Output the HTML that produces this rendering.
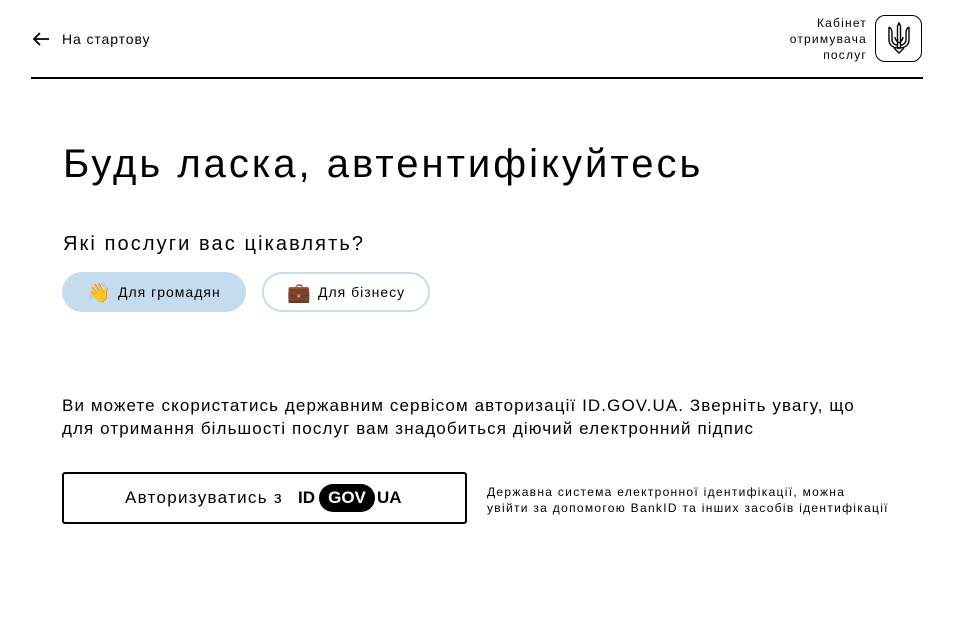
<!DOCTYPE html>
<html><head><meta charset="utf-8"><style>
body{margin:0;width:955px;height:638px;background:#fff;font-family:"Liberation Sans","DejaVu Sans",sans-serif;color:#000;position:relative;overflow:hidden}
.a{position:absolute;white-space:nowrap}
</style></head><body>
<svg class="a" style="left:32px;top:31px" width="18" height="16" viewBox="0 0 18 16"><path d="M17 8H2M8 2L2 8l6 6" fill="none" stroke="#000" stroke-width="1.8"/></svg>
<div class="a" style="left:62px;top:31px;font-size:14px;letter-spacing:0.9px">На стартову</div>
<div class="a" style="left:760px;top:15px;width:107px;text-align:right;font-size:12px;line-height:16px;letter-spacing:1.2px">Кабінет<br>отримувача<br>послуг</div>
<div class="a" style="left:875px;top:15px;width:47px;height:47px;border:1px solid #000;border-radius:10px;box-sizing:border-box"></div>
<svg class="a" style="left:887px;top:22px" width="24" height="33" viewBox="0 0 24 33"><g fill="none" stroke="#000" stroke-width="1.4"><path d="M12 1l-1.5 3v22h3V4z"/><path d="M2 5v13c0 5 4 8 10 8s10-3 10-8V5"/><path d="M2 5c2 1 3 3 3 6v7c0 3 3 5 5 5M22 5c-2 1-3 3-3 6v7c0 3-3 5-5 5"/><path d="M8 15c0 3 2 4 4 6M16 15c0 3-2 4-4 6M7 26l5 5 5-5"/></g></svg>
<div class="a" style="left:31px;top:77px;width:892px;height:2px;background:#000"></div>
<div class="a" style="left:63px;top:142px;font-size:40px;letter-spacing:3px">Будь ласка, автентифікуйтесь</div>
<div class="a" style="left:63px;top:233px;font-size:20px;letter-spacing:2.1px">Які послуги вас цікавлять?</div>
<div class="a" style="left:62px;top:272px;width:184px;height:40px;border-radius:20px;background:#c5dcee"></div>
<div class="a" style="left:87px;top:281px;font-size:19px">👋</div>
<div class="a" style="left:118px;top:284px;font-size:14px;letter-spacing:1px">Для громадян</div>
<div class="a" style="left:262px;top:272px;width:168px;height:40px;border-radius:20px;border:2px solid #c5dcee;box-sizing:border-box"></div>
<div class="a" style="left:287px;top:281px;font-size:19px">💼</div>
<div class="a" style="left:318px;top:284px;font-size:14px;letter-spacing:1px">Для бізнесу</div>
<div class="a" style="left:62px;top:394px;font-size:17px;line-height:23px;letter-spacing:1.1px">Ви можете скористатись державним сервісом авторизації ID.GOV.UA. Зверніть увагу, що<br>для отримання більшості послуг вам знадобиться діючий електронний підпис</div>
<div class="a" style="left:62px;top:472px;width:405px;height:52px;border:2px solid #000;border-radius:3px;box-sizing:border-box"></div>
<div class="a" style="left:125px;top:488px;font-size:17px;letter-spacing:1.3px">Авторизуватись з</div>
<div class="a" style="left:298px;top:488px;font-size:17px;font-weight:bold">ID</div>
<div class="a" style="left:319px;top:484px;width:56px;height:28px;border-radius:14px;background:#000;color:#fff;font-size:17px;font-weight:bold;text-align:center;line-height:28px">GOV</div>
<div class="a" style="left:377px;top:488px;font-size:17px;font-weight:bold">UA</div>
<div class="a" style="left:487px;top:484px;font-size:12px;line-height:16px;letter-spacing:1.3px">Державна система електронної ідентифікації, можна<br>увійти за допомогою BankID та інших засобів ідентифікації</div>
</body></html>
